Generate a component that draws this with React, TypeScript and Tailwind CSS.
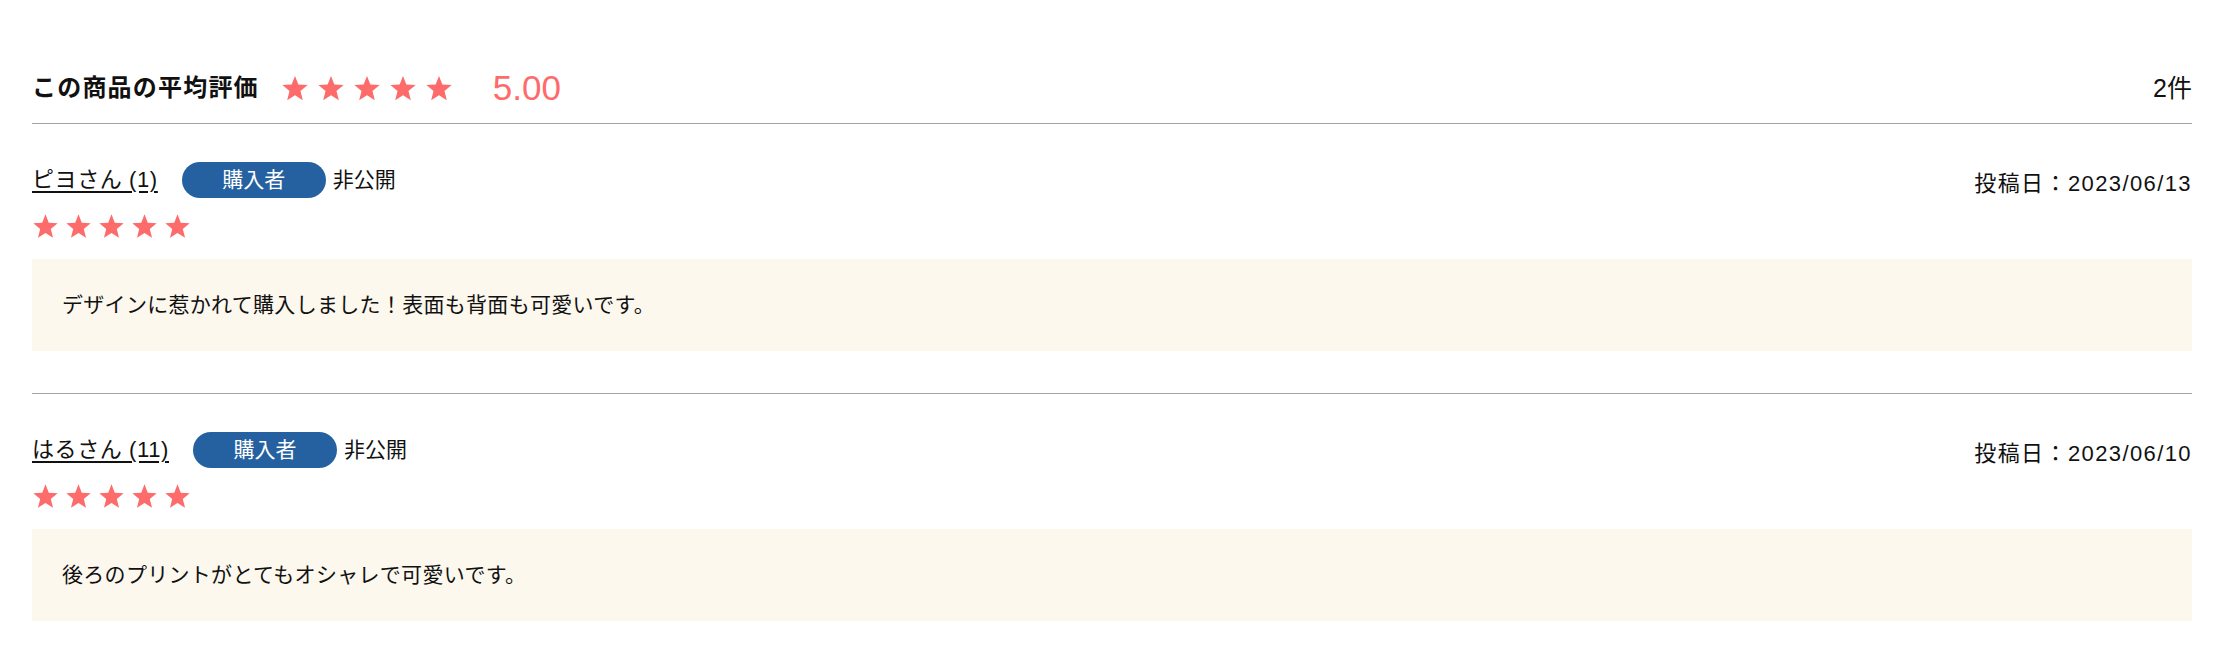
import React from "react";

const reviews = [
    {
        name: "ピヨさん (1)",
        date: "2023/06/13",
        rating: 5,
        comment: "デザインに惹かれて購入しました！表面も背面も可愛いです。",
    },
    {
        name: "はるさん (11)",
        date: "2023/06/10",
        rating: 5,
        comment: "後ろのプリントがとてもオシャレで可愛いです。",
    },
];

function Star({ className }: { className?: string }) {
    return (
        <svg viewBox="0 0 24 24" className={className} fill="#fd6b6b">
            <polygon points="12,1.2 14.9,8.6 22.8,9.1 16.7,14.2 18.7,22 12,17.7 5.3,22 7.3,14.2 1.2,9.1 9.1,8.6" />
        </svg>
    );
}

function Stars({ count, big }: { count: number; big?: boolean }) {
    return (
        <div className={big ? "flex items-center gap-[8px]" : "flex items-center gap-[6px]"}>
            {Array.from({ length: count }).map((_, i) => (
                <Star key={i} className={big ? "h-[29px] w-[28px]" : "h-[27px] w-[27px]"} />
            ))}
        </div>
    );
}

export default function App() {
    return (
        <div
            className="min-h-[670px] w-full bg-white px-[32px] text-[#111]"
            style={{ fontFamily: '"Liberation Sans", "Noto Sans CJK JP", sans-serif' }}
        >
            {/* 平均評価 */}
            <div className="flex items-center justify-between border-b border-[#a3a3a3] pt-[70px] pb-[17px]">
                <div className="flex items-center">
                    <h2 className="text-[24px] font-bold leading-[36px] tracking-[1.2px]">この商品の平均評価</h2>
                    <div className="ml-[22px]">
                        <Stars count={5} big />
                    </div>
                    <span className="ml-[40px] text-[35px] leading-[36px] text-[#fd6b6b]">5.00</span>
                </div>
                <span className="text-[25px] leading-[36px]">2件</span>
            </div>

            {reviews.map((r, idx) => (
                <div
                    key={idx}
                    className={
                        idx < reviews.length - 1
                            ? "border-b border-[#a3a3a3] pt-[38px] pb-[42px]"
                            : "pt-[38px] pb-[42px]"
                    }
                >
                    <div className="flex items-start justify-between">
                        <div>
                            <div className="flex items-center">
                                <span className="text-[22px] leading-[36px] tracking-[0.6px] underline underline-offset-[4px]">
                                    {r.name}
                                </span>
                                <span className="ml-[24px] flex h-[36px] w-[144px] items-center justify-center rounded-full bg-[#2561a0] text-[21px] text-white">
                                    購入者
                                </span>
                                <span className="ml-[7px] text-[21px] leading-[36px]">非公開</span>
                            </div>
                            <div className="mt-[15px]">
                                <Stars count={r.rating} />
                            </div>
                        </div>
                        <div className="pt-[6px] text-[22px] leading-[32px] tracking-[1.4px]">投稿日：{r.date}</div>
                    </div>
                    <div className="mt-[19px] flex h-[92px] items-center bg-[#fcf8ee] px-[30px] text-[21px] tracking-[0.3px]">
                        {r.comment}
                    </div>
                </div>
            ))}
        </div>
    );
}
